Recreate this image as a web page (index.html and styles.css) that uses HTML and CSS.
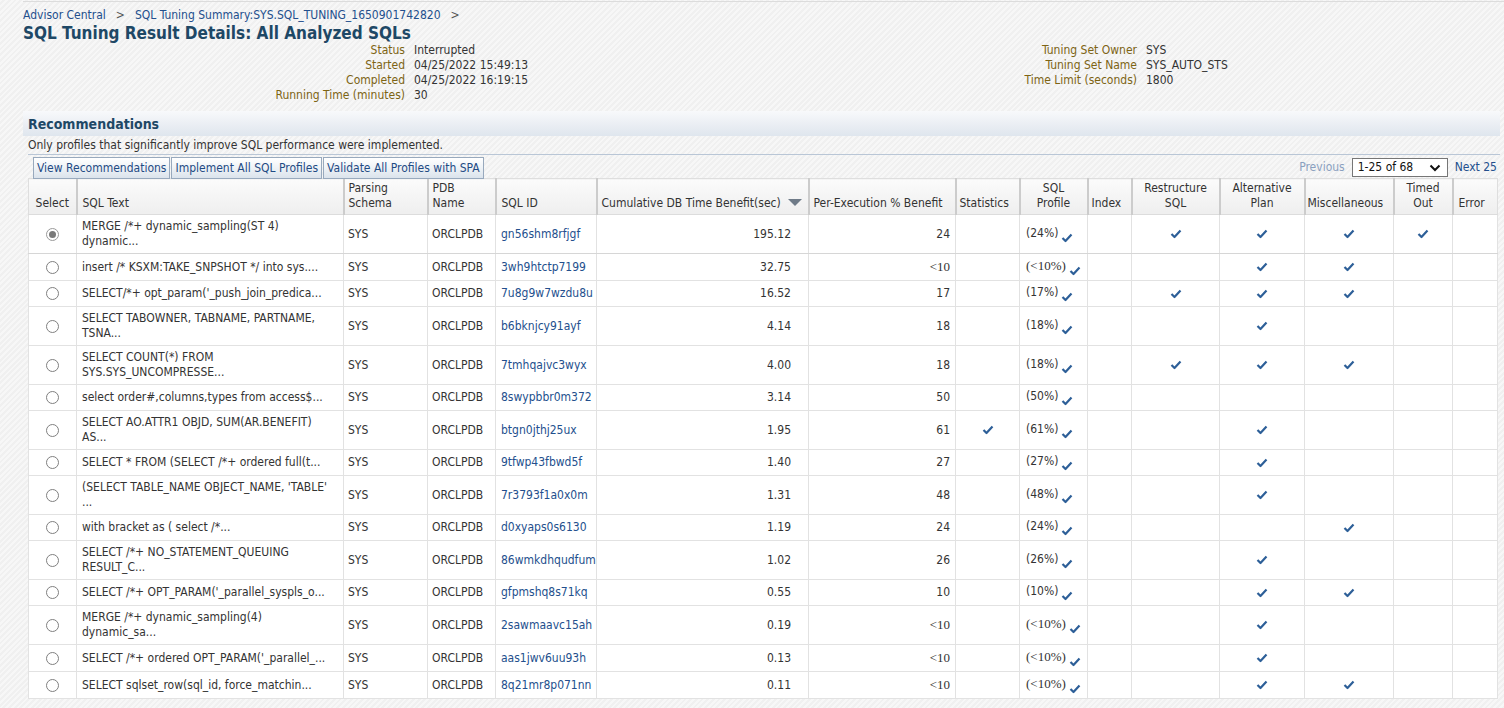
FILE: index.html
```html
<!DOCTYPE html>
<html>
<head>
<meta charset="utf-8">
<title>SQL Tuning Result Details</title>
<link rel="stylesheet" href="styles.css">
</head>
<body>
<div class="topline"></div>
<div class="page">
  <div class="crumbs"><a class="link">Advisor Central</a><span class="sep">&gt;</span><a class="link">SQL Tuning Summary:SYS.SQL_TUNING_1650901742820</a><span class="sep">&gt;</span></div>
  <h1 class="title">SQL Tuning Result Details: All Analyzed SQLs</h1>
  <div class="info">
    <div class="info-left">
      <span class="lbl">Status</span><span class="val">Interrupted</span>
      <span class="lbl">Started</span><span class="val">04/25/2022 15:49:13</span>
      <span class="lbl">Completed</span><span class="val">04/25/2022 16:19:15</span>
      <span class="lbl">Running Time (minutes)</span><span class="val">30</span>
    </div>
    <div class="info-right">
      <span class="lbl">Tuning Set Owner</span><span class="val">SYS</span>
      <span class="lbl">Tuning Set Name</span><span class="val">SYS_AUTO_STS</span>
      <span class="lbl">Time Limit (seconds)</span><span class="val">1800</span>
    </div>
  </div>

  <div class="section-head"><h2 class="section-title">Recommendations</h2></div>
  <div class="section-body">
    <div class="note">Only profiles that significantly improve SQL performance were implemented.</div>
    <div class="toolbar">
      <div class="buttons">
        <button class="btn">View Recommendations</button><button class="btn">Implement All SQL Profiles</button><button class="btn">Validate All Profiles with SPA</button>
      </div>
      <div class="pager">
        <span class="prev">Previous</span>
        <div class="pselect"><span>1-25 of 68</span><svg class="chev" width="12" height="8" viewBox="0 0 12 8"><path d="M1.5 1.5 L6 6 L10.5 1.5" fill="none" stroke="#111" stroke-width="2"/></svg></div>
        <a class="link next">Next 25</a>
      </div>
    </div>

    <table class="grid">
      <colgroup>
        <col class="w-sel"><col class="w-text"><col class="w-schema"><col class="w-pdb"><col class="w-id"><col class="w-cum"><col class="w-per"><col class="w-stat"><col class="w-prof"><col class="w-idx"><col class="w-rest"><col class="w-alt"><col class="w-misc"><col class="w-to"><col class="w-err">
      </colgroup>
      <thead>
        <tr>
          <th class="ctr">Select</th>
          <th class="pl5">SQL Text</th>
          <th>Parsing<br>Schema</th>
          <th>PDB<br>Name</th>
          <th class="pl5">SQL ID</th>
          <th>Cumulative DB Time Benefit(sec) <span class="sort"></span></th>
          <th>Per-Execution % Benefit</th>
          <th class="pl3">Statistics</th>
          <th class="ctr">SQL<br>Profile</th>
          <th class="pl3">Index</th>
          <th class="ctr">Restructure<br>SQL</th>
          <th class="ctr">Alternative<br>Plan</th>
          <th class="pl2">Miscellaneous</th>
          <th class="ctr">Timed<br>Out</th>
          <th class="pl5">Error</th>
        </tr>
      </thead>
      <tbody id="rows"></tbody>
    </table>
  </div>
</div>
<script src="app.js"></script>
</body>
</html>
```
FILE: app.js
```js
var data = [
  [1, "MERGE /*+ dynamic_sampling(ST 4)<br>dynamic...", "gn56shm8rfjgf", "195.12", "24", 0, "(24%)", 0, 1, 1, 1, 1],
  [0, "insert /* KSXM:TAKE_SNPSHOT */ into sys....", "3wh9htctp7199", "32.75", "<10", 0, "(<10%)", 0, 0, 1, 1, 0],
  [0, "SELECT/*+ opt_param('_push_join_predica...", "7u8g9w7wzdu8u", "16.52", "17", 0, "(17%)", 0, 1, 1, 1, 0],
  [0, "SELECT TABOWNER, TABNAME, PARTNAME,<br>TSNA...", "b6bknjcy91ayf", "4.14", "18", 0, "(18%)", 0, 0, 1, 0, 0],
  [0, "SELECT COUNT(*) FROM<br>SYS.SYS_UNCOMPRESSE...", "7tmhqajvc3wyx", "4.00", "18", 0, "(18%)", 0, 1, 1, 1, 0],
  [0, "select order#,columns,types from access$...", "8swypbbr0m372", "3.14", "50", 0, "(50%)", 0, 0, 0, 0, 0],
  [0, "SELECT AO.ATTR1 OBJD, SUM(AR.BENEFIT)<br>AS...", "btgn0jthj25ux", "1.95", "61", 1, "(61%)", 0, 0, 1, 0, 0],
  [0, "SELECT * FROM (SELECT /*+ ordered full(t...", "9tfwp43fbwd5f", "1.40", "27", 0, "(27%)", 0, 0, 1, 0, 0],
  [0, "(SELECT TABLE_NAME OBJECT_NAME, 'TABLE'<br>...", "7r3793f1a0x0m", "1.31", "48", 0, "(48%)", 0, 0, 1, 0, 0],
  [0, "with bracket as ( select /*...", "d0xyaps0s6130", "1.19", "24", 0, "(24%)", 0, 0, 0, 1, 0],
  [0, "SELECT /*+ NO_STATEMENT_QUEUING<br>RESULT_C...", "86wmkdhqudfum", "1.02", "26", 0, "(26%)", 0, 0, 1, 0, 0],
  [0, "SELECT /*+ OPT_PARAM('_parallel_syspls_o...", "gfpmshq8s71kq", "0.55", "10", 0, "(10%)", 0, 0, 1, 1, 0],
  [0, "MERGE /*+ dynamic_sampling(4)<br>dynamic_sa...", "2sawmaavc15ah", "0.19", "<10", 0, "(<10%)", 0, 0, 1, 0, 0],
  [0, "SELECT /*+ ordered OPT_PARAM('_parallel_...", "aas1jwv6uu93h", "0.13", "<10", 0, "(<10%)", 0, 0, 1, 0, 0],
  [0, "SELECT sqlset_row(sql_id, force_matchin...", "8q21mr8p071nn", "0.11", "<10", 0, "(<10%)", 0, 0, 1, 1, 0]
];
var CHECK = '<svg class="chk" width="12" height="10" viewBox="0 0 12 10"><path d="M1.5 5 L4.5 8 L10.5 1.5" fill="none" stroke="#2d5f98" stroke-width="2.2" stroke-linejoin="round"/></svg>';
function esc(s) { return s.replace(/</g, "&lt;").replace(/&lt;br>/g, "<br>"); }
function lt(s, cls) {
  if (s.indexOf("<") >= 0) return '<span class="' + cls + '">' + s.replace(/</g, "&lt;") + '</span>';
  return s;
}
var html = "";
data.forEach(function (r, i) {
  var c = function (v) { return v ? CHECK : ""; };
  html += '<tr' + (i === 0 ? ' class="first"' : '') + '>' +
    '<td class="ctr"><span class="radio' + (r[0] ? ' on' : '') + '"></span></td>' +
    '<td class="txt">' + esc(r[1]) + '</td>' +
    '<td>SYS</td>' +
    '<td>ORCLPDB</td>' +
    '<td class="pl5"><a class="link">' + r[2] + '</a></td>' +
    '<td class="num cum">' + r[3] + '</td>' +
    '<td class="num">' + lt(r[4], "serif") + '</td>' +
    '<td class="ctr">' + c(r[5]) + '</td>' +
    '<td class="prof">' + lt(r[6], "serif") + CHECK + '</td>' +
    '<td>' + c(r[7]) + '</td>' +
    '<td class="ctr">' + c(r[8]) + '</td>' +
    '<td class="ctr">' + c(r[9]) + '</td>' +
    '<td class="ctr">' + c(r[10]) + '</td>' +
    '<td class="ctr">' + c(r[11]) + '</td>' +
    '<td></td>' +
    '</tr>';
});
document.getElementById("rows").innerHTML = html;
```
FILE: styles.css
```css
html, body {
  margin: 0;
  padding: 0;
}
body {
  font-family: "DejaVu Sans Condensed", "DejaVu Sans", sans-serif;
  font-stretch: condensed;
  font-size: 12px;
  line-height: 15px;
  color: #333;
  background-color: #f4f4f4;
  background-image: repeating-linear-gradient(135deg, #f7f7f7 0, #f7f7f7 2px, #f0f0f0 2px, #f0f0f0 4px);
  min-height: 708px;
}
.topline {
  margin: 1px 0 0 23px;
  height: 1px;
  background: #dcdcdc;
}
.page {
  padding: 6px 4px 0 23px;
}
.link {
  color: #234f8d;
  text-decoration: none;
}
.crumbs {
  line-height: 15px;
}
.sep {
  color: #555;
  margin: 0 10px;
}
.title {
  margin: 0;
  font-size: 17px;
  line-height: 20px;
  font-weight: bold;
  color: #1e4866;
}
.info {
  display: flex;
  margin-top: 0;
}
.info-left {
  width: 877px;
  display: grid;
  grid-template-columns: 382px auto;
  column-gap: 9px;
  align-content: start;
}
.info-right {
  display: grid;
  grid-template-columns: 237px auto;
  column-gap: 9px;
  align-content: start;
}
.lbl {
  text-align: right;
  color: #7d6414;
}
.val {
  color: #333;
}
.section-head {
  margin-top: 8px;
  height: 25px;
  background: linear-gradient(to bottom, #f8f9fb 0%, #e9edf3 60%, #dfe6ee 100%);
  display: flex;
  align-items: center;
  padding-left: 5px;
}
.section-title {
  margin: 2px 0 0;
  font-size: 14px;
  font-weight: bold;
  color: #1e4866;
}
.section-body {
  padding-left: 5px;
}
.note {
  margin-top: 2px;
  padding-bottom: 1px;
  border-bottom: 1px solid #b9c6d6;
  color: #333;
}
.toolbar {
  display: flex;
  justify-content: space-between;
  align-items: center;
  margin-top: 2px;
  padding-left: 5px;
  padding-right: 3px;
  height: 21px;
}
.buttons {
  display: flex;
  align-self: flex-start;
}
.btn {
  font: inherit;
  font-stretch: condensed;
  height: 22px;
  padding: 0 3px;
  margin: 0 1px 0 0;
  color: #1f4b84;
  background: linear-gradient(to bottom, #ffffff 0%, #eef2f6 50%, #dbe3ec 100%);
  border: 1px solid #98a9bd;
  border-radius: 0;
}
.pager {
  display: flex;
  align-items: center;
}
.prev {
  color: #8aa0bf;
  margin-right: 7px;
}
.pselect {
  display: flex;
  align-items: center;
  justify-content: space-between;
  box-sizing: border-box;
  width: 96px;
  height: 19px;
  padding: 0 6px 0 5px;
  border: 1px solid #767676;
  background: #fff;
  color: #111;
  margin-right: 7px;
}
.chev {
  display: block;
}
.grid {
  width: 1469px;
  table-layout: fixed;
  border-collapse: collapse;
  background: #fff;
  border: 1px solid #dedede;
}
.w-sel { width: 48px; }
.w-text { width: 267px; }
.w-schema { width: 84px; }
.w-pdb { width: 68px; }
.w-id { width: 101px; }
.w-cum { width: 212px; }
.w-per { width: 147px; }
.w-stat { width: 64px; }
.w-prof { width: 68px; }
.w-idx { width: 44px; }
.w-rest { width: 88px; }
.w-alt { width: 85px; }
.w-misc { width: 89px; }
.w-to { width: 59px; }
.w-err { width: 45px; }
.grid th {
  font-weight: normal;
  text-align: left;
  vertical-align: bottom;
  color: #333;
  padding: 2px 4px 3px 4px;
  height: 30px;
  background: linear-gradient(to bottom, #fbfbfb, #eeeeee);
  border-left: 2px solid #cccccc;
  border-bottom: 1px solid #dcdcdc;
  white-space: nowrap;
  overflow: hidden;
}
.grid th:first-child {
  border-left: 1px solid #dedede;
}
.grid td {
  box-sizing: border-box;
  height: 25px;
  padding: 4px 4px 4px;
  vertical-align: middle;
  border: 1px solid #e2e2e2;
  white-space: nowrap;
  overflow: hidden;
  color: #333;
}
.grid tr.first td {
  border-bottom: 1px solid #d6d6d6;
}
.grid .ctr { text-align: center; }
.grid .pl7 { padding-left: 7px; }
.grid .pl5 { padding-left: 5px; }
.grid .pl3 { padding-left: 3px; }
.grid .pl2 { padding-left: 2px; }
.grid td.txt { padding-left: 5px; }
.grid td.num { text-align: right; padding-right: 5px; }
.grid td.cum { padding-right: 17px; }
.grid td.prof { padding-left: 6px; padding-right: 2px; }
.sort {
  display: inline-block;
  width: 0;
  height: 0;
  margin-left: 4px;
  border-left: 7px solid transparent;
  border-right: 7px solid transparent;
  border-top: 7px solid #6f7b88;
  vertical-align: 1px;
}
.radio {
  display: inline-block;
  box-sizing: border-box;
  width: 13px;
  height: 13px;
  border: 1px solid #808080;
  border-radius: 50%;
  background: #fff;
  vertical-align: middle;
  position: relative;
}
.radio.on {
  border-color: #9a9a9a;
}
.radio.on::after {
  content: "";
  position: absolute;
  left: 2px;
  top: 2px;
  width: 7px;
  height: 7px;
  border-radius: 50%;
  background: #7a7a7a;
}
.chk {
  display: inline-block;
  vertical-align: middle;
}
.prof .chk {
  margin-left: 3px;
  vertical-align: -6px;
}
.serif {
  font-family: "Liberation Serif", serif;
  font-stretch: normal;
  font-size: 13px;
}
```
